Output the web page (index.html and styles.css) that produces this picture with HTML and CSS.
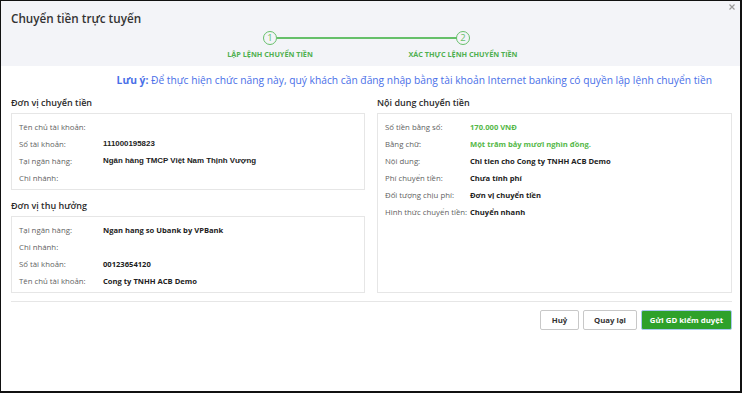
FILE: index.html
```html
<!DOCTYPE html>
<html lang="vi">
<head>
    <meta charset="UTF-8">
    <meta name="viewport" content="width=device-width, initial-scale=1.0">
    <title>Chuyển tiền trực tuyến</title>
    <link rel="stylesheet" href="styles.css">
</head>
<body>

<div class="modal">
    <div class="modal-header">
        <h1 class="modal-title">Chuyển tiền trực tuyến</h1>
        <span class="modal-close">
            <svg width="6" height="6" viewBox="0 0 6 6"><path d="M0.5 0.5L5.5 5.5M5.5 0.5L0.5 5.5" stroke="#9a9a9a" stroke-width="1.2"/></svg>
        </span>
        <div class="stepper">
            <div class="step done">
                <span class="step-circle">1</span>
                <span class="step-label">Lập lệnh chuyển tiền</span>
            </div>
            <div class="step">
                <span class="step-circle">2</span>
                <span class="step-label">Xác thực lệnh chuyển tiền</span>
            </div>
        </div>
    </div>

    <div class="modal-body">
        <p class="notice"><b>Lưu ý:</b> Để thực hiện chức năng này, quý khách cần đăng nhập bằng tài khoản Internet banking có quyền lập lệnh chuyển tiền</p>

        <div class="columns">
            <div class="column">
                <h2 class="section-title">Đơn vị chuyển tiền</h2>
                <div class="info-box">
                    <div class="info-row"><span class="info-label">Tên chủ tài khoản:</span><span class="info-value"></span></div>
                    <div class="info-row"><span class="info-label">Số tài khoản:</span><span class="info-value arial">111000195823</span></div>
                    <div class="info-row"><span class="info-label">Tại ngân hàng:</span><span class="info-value arial">Ngân hàng TMCP Việt Nam Thịnh Vượng</span></div>
                    <div class="info-row"><span class="info-label">Chi nhánh:</span><span class="info-value"></span></div>
                </div>

                <h2 class="section-title second">Đơn vị thụ hưởng</h2>
                <div class="info-box">
                    <div class="info-row"><span class="info-label">Tại ngân hàng:</span><span class="info-value">Ngan hang so Ubank by VPBank</span></div>
                    <div class="info-row"><span class="info-label">Chi nhánh:</span><span class="info-value"></span></div>
                    <div class="info-row"><span class="info-label">Số tài khoản:</span><span class="info-value">00123654120</span></div>
                    <div class="info-row"><span class="info-label">Tên chủ tài khoản:</span><span class="info-value">Cong ty TNHH ACB Demo</span></div>
                </div>
            </div>

            <div class="column">
                <h2 class="section-title">Nội dung chuyển tiền</h2>
                <div class="info-box grow">
                    <div class="info-row"><span class="info-label">Số tiền bằng số:</span><span class="info-value green">170.000 VNĐ</span></div>
                    <div class="info-row"><span class="info-label">Bằng chữ:</span><span class="info-value green">Một trăm bảy mươi nghìn đồng.</span></div>
                    <div class="info-row"><span class="info-label">Nội dung:</span><span class="info-value">Chi tien cho Cong ty TNHH ACB Demo</span></div>
                    <div class="info-row"><span class="info-label">Phí chuyển tiền:</span><span class="info-value">Chưa tính phí</span></div>
                    <div class="info-row"><span class="info-label">Đối tượng chịu phí:</span><span class="info-value">Đơn vị chuyển tiền</span></div>
                    <div class="info-row"><span class="info-label">Hình thức chuyển tiền:</span><span class="info-value">Chuyển nhanh</span></div>
                </div>
            </div>
        </div>

        <div class="actions">
            <button class="btn btn-cancel">Huỷ</button>
            <button class="btn btn-back">Quay lại</button>
            <button class="btn btn-primary">Gửi GD kiểm duyệt</button>
        </div>
    </div>
</div>

</body>
</html>
```

FILE: styles.css
```css
body {
    margin: 0;
    padding: 0;
    font-family: "Open Sans", Arial, sans-serif;
    color: #333;
    background-color: #fff;
}
.modal {
    box-sizing: border-box;
    width: 742px;
    height: 393px;
    border-style: solid;
    border-color: #111;
    border-width: 1px 2px 2px 1px;
    background-color: #fff;
}
.modal-header {
    position: relative;
    height: 65px;
    background-color: #f3f4f8;
    padding: 8px 10px 0;
    box-sizing: border-box;
}
.modal-title {
    margin: 0;
    font-size: 11.7px;
    font-weight: 600;
    line-height: 18px;
    color: #333;
}
.modal-close {
    position: absolute;
    top: 3px;
    right: 5px;
    line-height: 0;
}
.stepper {
    display: grid;
    grid-template-columns: 140px 140px;
    column-gap: 53px;
    margin: 4px 0 0 189px;
}
.step {
    position: relative;
    display: flex;
    flex-direction: column;
    align-items: center;
}
.step.done::after {
    content: "";
    position: absolute;
    top: 6px;
    left: 77px;
    width: 180px;
    height: 2px;
    background-color: #66c06a;
}
.step-circle {
    box-sizing: border-box;
    width: 14px;
    height: 14px;
    border: 1.5px solid #66c06a;
    border-radius: 50%;
    font-size: 9.5px;
    line-height: 11px;
    text-align: center;
    color: #66c06a;
}
.step-label {
    margin-top: 4px;
    font-size: 7.25px;
    font-weight: 700;
    text-transform: uppercase;
    color: #4fb04f;
}
.modal-body {
    padding: 7px 8px 0 10px;
}
.notice {
    margin: 0;
    font-size: 10.25px;
    line-height: 14px;
    text-align: right;
    padding-right: 20px;
    color: #4a6fe8;
}
.notice b {
    font-weight: 700;
}
.columns {
    display: grid;
    grid-template-columns: 354px 355px;
    column-gap: 12px;
    margin-top: 6px;
}
.column {
    display: flex;
    flex-direction: column;
}
.section-title {
    margin: 0;
    font-size: 9px;
    font-weight: 600;
    line-height: 20px;
    color: #2b2b2b;
}
.section-title.second {
    margin-top: 6px;
}
.info-box {
    border: 1px solid #e6e6e6;
    padding: 4px 7px 3px;
}
.info-box.grow {
    flex: 1;
}
.info-row {
    display: flex;
    height: 17px;
    align-items: center;
    font-size: 7.8px;
    white-space: nowrap;
}
.info-label {
    width: 84px;
    flex-shrink: 0;
    color: #5f5f5f;
}
.grow .info-label {
    width: 85px;
}
.info-value {
    font-size: 7.6px;
    font-weight: 700;
    color: #222;
}
.info-value.arial {
    font-family: "Liberation Sans", Arial, sans-serif;
    font-size: 7.9px;
}
.info-value.green {
    color: #55b848;
}
.actions {
    display: flex;
    justify-content: flex-end;
    gap: 4px;
    margin-top: 8px;
    padding-top: 8px;
    border-top: 1.5px solid #e6e6e6;
}
.btn {
    height: 20px;
    padding: 0;
    border: 1px solid #c8c8c8;
    border-radius: 2px;
    background-color: #fff;
    font-family: "Open Sans", Arial, sans-serif;
    font-size: 7.8px;
    font-weight: 700;
    color: #333;
    white-space: nowrap;
}
.btn-cancel {
    width: 39px;
}
.btn-back {
    width: 54px;
}
.btn-primary {
    width: 91px;
    background-color: #2ea12a;
    border-color: #a9c9ef;
    color: #fff;
}
```
